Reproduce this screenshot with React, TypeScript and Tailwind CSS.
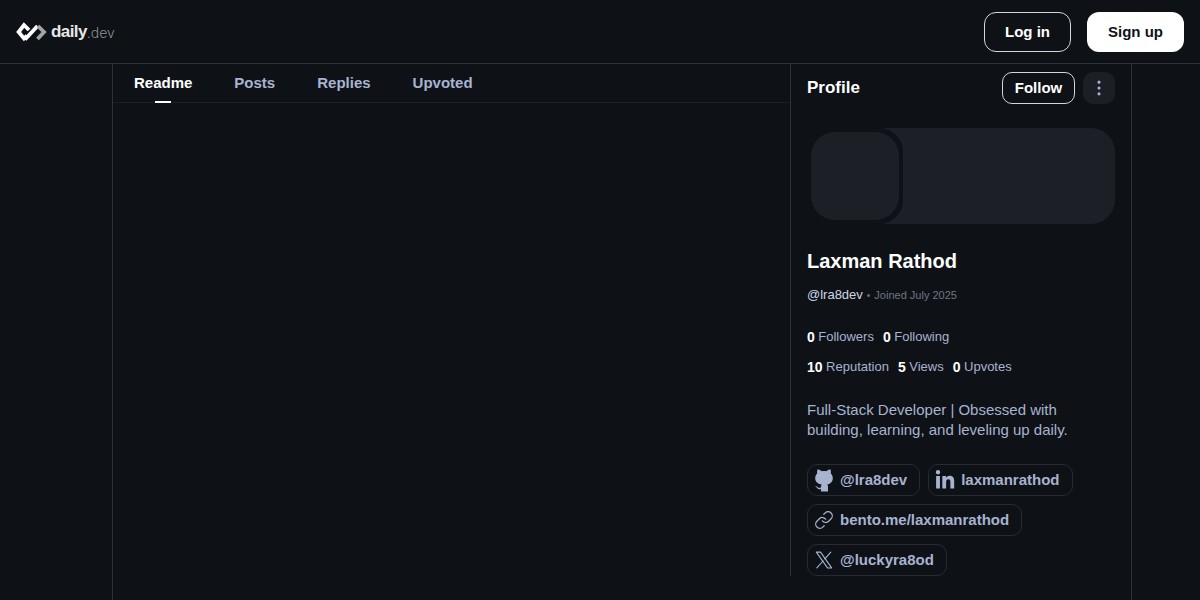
import React from "react";
import { FaLinkedinIn } from "react-icons/fa";
import { Link, MoreVertical } from "lucide-react";

function XIcon() {
  return (
    <svg width="22" height="22" viewBox="0 0 24 24" fill="none" stroke="#a8b3cf" strokeWidth="1.3" strokeLinejoin="round">
      <path d="M2.8 2.5h5l13.4 19h-5z" />
      <path d="M20.2 2.5 13 10.6M10.9 13.2 3.4 21.5" strokeLinecap="round" />
    </svg>
  );
}

function GithubIcon() {
  return (
    <svg width="18" height="23" viewBox="0 0 18 23" fill="#a8b3cf">
      <path d="M2.5.5C4 .5 5.5 1.2 6.8 2.2c1.2-.3 3.2-.3 4.4 0C12.5 1.2 14 .5 15.5.5c.5 1.5.6 2.7.3 3.9 1.4 1.4 2 2.8 2 4.6 0 4-2.8 6-5.6 6.6.6.6.8 1.4.8 2.4v4.5H6v-2.500c-1.700.5-3.300 0-4.400-1.600C1.100 17.500.500 17.300 0 17c1.500-.2 2.300.8 3 1.600.8.400 2 .2 3-.2 0-1.400.2-2.200.8-2.800C3 15 .2 13 .2 9c0-1.800.6-3.200 2-4.600C1.900 3.200 2 2 2.500.5Z" />
    </svg>
  );
}

function Logo() {
  return (
    <div className="flex items-center">
      <svg width="32" height="20" viewBox="0 0 32 20" fill="none">
        <path d="M13 8 8 3 2.600 10 8 16.500 11 13.500" stroke="#fff" strokeWidth="3.8" />
        <path d="M9 17.500 21.500 4" stroke="#fff" strokeWidth="3.800" />
        <path d="M22 4 28 10 21.500 17" stroke="#a3a3a3" strokeWidth="3.800" />
      </svg>
      <span className="ml-[3px] text-[17px] leading-none font-bold tracking-[-0.6px] text-[#e8e8e8]">daily</span>
      <span className="mt-[3px] font-['Inter',sans-serif] text-[14px] leading-none font-light text-[#8b8f98]">.dev</span>
    </div>
  );
}

function Stat({ n, label }: { n: string; label: string }) {
  return (
    <span className="flex items-center">
      <strong className="mr-[3.5px] text-[14px] font-bold text-white">{n}</strong>
      <span className="text-[13px] text-[#a8b3cf]">{label}</span>
    </span>
  );
}

function Chip({ icon, label }: { icon: React.ReactNode; label: string }) {
  return (
    <div className="flex h-8 items-center rounded-[10px] border border-[#272b33] pr-3 pl-[6px] text-[15px] font-bold text-[#a8b3cf]">
      <span className="mr-[6px] flex w-5 items-center justify-center">{icon}</span>
      {label}
    </div>
  );
}

export default function App() {
  return (
    <div className="h-[600px] overflow-hidden bg-[#0e1217] font-['Liberation_Sans',Arial,sans-serif]">
      <header className="flex h-16 items-center justify-between border-b border-[#2d313a] px-4">
        <Logo />
        <div className="flex items-center gap-4">
          <button className="h-10 w-[87px] rounded-xl border border-[#cfd6e6] pt-px text-[15px] font-bold text-white">Log in</button>
          <button className="h-10 w-[97px] rounded-xl bg-white pt-px text-[15px] font-bold text-[#0e1217]">Sign up</button>
        </div>
      </header>
      <div className="ml-[112px] flex h-[536px] w-[1020px] border-x border-[#2d313a]">
        <main className="flex-1">
          <nav className="flex h-[39px] border-b border-[#1c1f26] pl-[21px] text-[15px] font-bold text-[#a8b3cf]">
            <div className="relative mr-[42px] flex h-[38px] items-center text-white">
              Readme
              <span className="absolute bottom-[-1px] left-[21px] h-0.5 w-4 bg-white" />
            </div>
            <div className="mr-[42px] flex h-[38px] items-center">Posts</div>
            <div className="mr-[42px] flex h-[38px] items-center">Replies</div>
            <div className="flex h-[38px] items-center">Upvoted</div>
          </nav>
        </main>
        <aside className="h-[512px] w-[341px] border-l border-[#2d313a] px-4">
          <div className="flex h-[47px] items-center justify-between pt-[1px]">
            <h2 className="text-[17px] font-bold text-white">Profile</h2>
            <div className="flex items-center gap-2">
              <button className="h-8 w-[73px] rounded-[10px] border border-[#cfd6e6] text-[15px] font-bold text-white">Follow</button>
              <button className="flex h-8 w-8 items-center justify-center rounded-[10px] bg-[#1c1f26] text-[#a8b3cf]">
                <MoreVertical size={20} strokeWidth={1.75} />
              </button>
            </div>
          </div>
          <div className="mt-[17px] flex h-24 items-center rounded-3xl bg-[#1c1f26]">
            <div className="h-24 w-24 rounded-3xl bg-[#0e1217] p-1">
              <div className="h-full w-full rounded-3xl bg-[#1c1f26]" />
            </div>
          </div>
          <h1 className="mt-[24px] text-[20px] leading-[26px] font-bold text-white">Laxman Rathod</h1>
          <div className="mt-[11px] flex h-5 items-center">
            <span className="text-[13px] text-[#cfd6e6]">@lra8dev</span>
            <span className="mr-[4px] ml-[4px] text-[10px] text-[#6b7280]">•</span>
            <span className="text-[11px] text-[#6f7682]">Joined July 2025</span>
          </div>
          <div className="mt-[22px] flex h-5 gap-[9px]">
            <Stat n="0" label="Followers" />
            <Stat n="0" label="Following" />
          </div>
          <div className="mt-[10px] flex h-5 gap-[9px]">
            <Stat n="10" label="Reputation" />
            <Stat n="5" label="Views" />
            <Stat n="0" label="Upvotes" />
          </div>
          <p className="mt-[23px] text-[15px] leading-5 text-[#a8b3cf]">
            Full-Stack Developer | Obsessed with
            <br />
            building, learning, and leveling up daily.
          </p>
          <div className="mt-6 flex flex-wrap gap-2">
            <Chip icon={<GithubIcon />} label="@lra8dev" />
            <Chip icon={<FaLinkedinIn size={21} color="#a8b3cf" />} label="laxmanrathod" />
            <Chip icon={<Link size={22} color="#a8b3cf" strokeWidth={1.5} />} label="bento.me/laxmanrathod" />
            <Chip icon={<XIcon />} label="@luckyra8od" />
          </div>
        </aside>
      </div>
    </div>
  );
}
